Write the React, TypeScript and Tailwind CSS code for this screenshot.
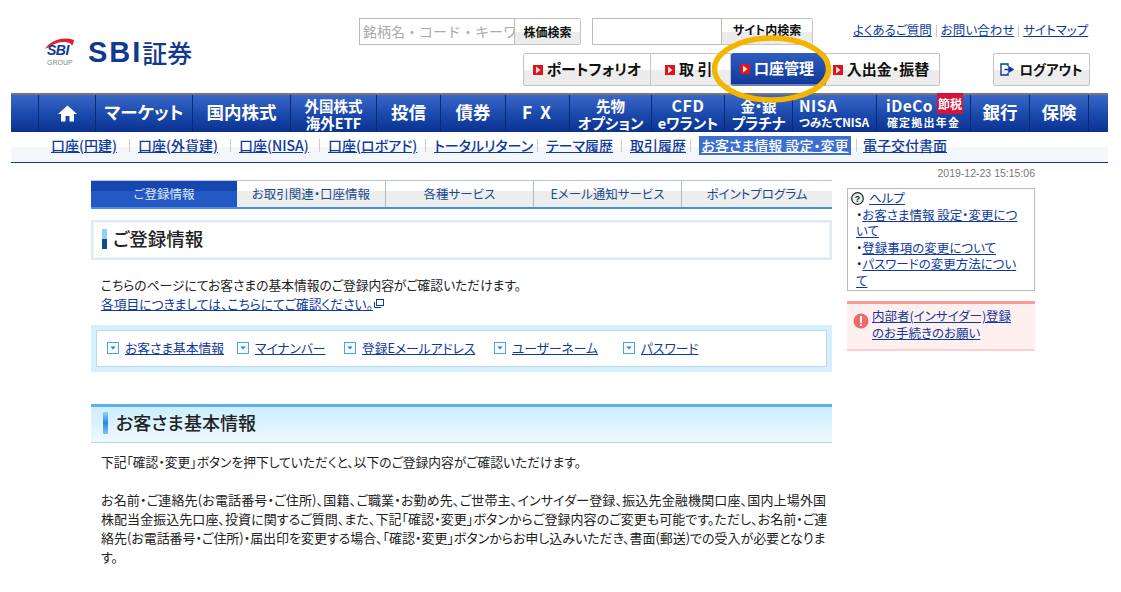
import type { ReactNode } from "react";

const jp = "font-['Noto_Sans_CJK_JP','Noto_Sans',sans-serif] [font-feature-settings:'palt']";

// ---- Small icons --------------------------------------------------------

function RedArrow() {
  return (
    <svg width="10" height="10" viewBox="0 0 10 10" className="shrink-0">
      <rect width="10" height="10" fill="#e0141e" />
      <path d="M3 1.5 L7.5 5 L3 8.5 Z" fill="#ffe9d6" />
    </svg>
  );
}

function AnchorIcon() {
  return (
    <svg width="12" height="12" viewBox="0 0 12 12" className="shrink-0">
      <rect x="0.5" y="0.5" width="11" height="11" fill="#f4faff" stroke="#4aa3e8" />
      <path d="M3.5 4.5 H8.5 L6 7.5 Z" fill="#2a7cc8" />
    </svg>
  );
}

function SectionMark({ tall }: { tall?: boolean }) {
  return (
    <span
      className={
        tall
          ? "h-[22px] w-[5px] shrink-0 bg-gradient-to-b from-[#8fd0f5] via-[#1d8be0] to-[#7cc6f2]"
          : "h-[20px] w-[5px] shrink-0 bg-gradient-to-b from-[#8fd0f5] from-50% to-[#0c4f8c] to-50%"
      }
    />
  );
}

function SbiLogo() {
  return (
    <div className="flex items-center gap-[13px]">
      <div className="relative h-[30px] w-[31px]">
        <svg width="31" height="16" viewBox="0 0 31 16" className="absolute left-0 top-0">
          <path d="M1 12 C6 4 18 -1 30 3 C30 5 29 7 28 9 C28 5 16 2 5 10 Z" fill="#e0202c" />
        </svg>
        <span className="absolute left-[3px] top-[6px] font-['Liberation_Sans',sans-serif] text-[14px] font-bold italic leading-[15px] tracking-[-0.5px] text-[#0f3a8f]">
          SBI
        </span>
        <span className="absolute left-[3px] top-[22px] font-['Liberation_Sans',sans-serif] text-[7px] leading-[8px] text-[#888]">
          GROUP
        </span>
      </div>
      <span className="flex items-center leading-[30px] text-[#0f3a8f]">
        <span className="font-['Liberation_Sans',sans-serif] text-[29px] font-bold tracking-[2px]">SBI</span>
        <span className="text-[25px] font-medium">証券</span>
      </span>
    </div>
  );
}

// ---- Header -------------------------------------------------------------

function GrayButton({ className, children }: { className: string; children: ReactNode }) {
  return (
    <div
      className={`flex items-center justify-center border border-[#c4c4c4] bg-gradient-to-b from-white from-50% to-[#ececec] to-50% font-bold text-[#111] ${className}`}
    >
      {children}
    </div>
  );
}

function Header() {
  return (
    <div className="flex h-[93px]">
      <div className="w-[359px] pl-[44px] pt-[37px]">
        <SbiLogo />
      </div>
      <div className="flex flex-col pt-[18px]">
        <div className="flex h-[27px]">
          <div className="flex w-[156px] items-center overflow-hidden whitespace-nowrap border border-[#bbb] pl-[3px] text-[14px] text-[#aaa] [font-feature-settings:normal]">
            銘柄名・コード・キーワード
          </div>
          <GrayButton className="w-[66px] rounded-r-[2px] border-l-0 text-[12px]">株価検索</GrayButton>
          <div className="ml-[11px] w-[130px] border border-[#bbb]" />
          <GrayButton className="w-[91px] rounded-r-[2px] border-l-0 pb-[3px] text-[12px]">サイト内検索</GrayButton>
          <div className="ml-[40px] flex items-center pb-[2px] text-[12.5px] text-[#0f3a9c]">
            <a className="underline">よくあるご質問</a>
            <span className="mx-[4px] h-[12px] w-px bg-[#ccc]" />
            <a className="underline">お問い合わせ</a>
            <span className="mx-[4px] h-[12px] w-px bg-[#ccc]" />
            <a className="underline">サイトマップ</a>
          </div>
        </div>
        <div className="ml-[164px] mt-[8px] flex h-[33px] text-[15px]">
          <GrayButton className="w-[128px] gap-[4px] rounded-l-[2px]">
            <RedArrow />
            ポートフォリオ
          </GrayButton>
          <GrayButton className="w-[80px] justify-start gap-[4px] border-l-0 pl-[14px]">
            <RedArrow />
            取 引
          </GrayButton>
          <div className="flex w-[95px] items-center justify-center gap-[4px] rounded-[2px] border-b-2 border-b-[#6a7fb0] bg-gradient-to-b from-[#2f5cc0] to-[#0f3a9c] pr-[3px] font-bold text-white">
            <RedArrow />
            口座管理
          </div>
          <GrayButton className="w-[114px] gap-[4px] rounded-r-[2px] border-l-0 pr-[3px]">
            <RedArrow />
            入出金・振替
          </GrayButton>
          <GrayButton className="ml-[53px] w-[97px] gap-[5px] rounded-[2px] text-[13.5px]">
            <svg width="14" height="13" viewBox="0 0 14 13" fill="none" stroke="#0f3a9c" strokeWidth="1.4">
              <path d="M8 3 V1 H1 V12 H8 V10" />
              <path d="M4.5 6.5 H9 V4 L13 6.5 L9 9 V6.5" fill="#0f3a9c" />
            </svg>
            ログアウト
          </GrayButton>
        </div>
      </div>
    </div>
  );
}

// ---- Global nav ---------------------------------------------------------

const navItems: { w: string; top: string; bottom?: string; cls?: string }[] = [
  { w: "w-[97px]", top: "マーケット" },
  { w: "w-[98px]", top: "国内株式" },
  { w: "w-[86px]", top: "外国株式", bottom: "海外ETF" },
  { w: "w-[64px]", top: "投信" },
  { w: "w-[65px]", top: "債券" },
  { w: "w-[64px]", top: "F X", cls: "tracking-[2px]" },
  { w: "w-[82px]", top: "先物", bottom: "オプション" },
  { w: "w-[73px]", top: "CFD", bottom: "eワラント", cls: "text-[16px] tracking-[0.5px]" },
  { w: "w-[68px]", top: "金・銀", bottom: "プラチナ" },
];

function NavCell({ className, children }: { className: string; children: ReactNode }) {
  return (
    <div
      className={`flex shrink-0 flex-col items-center justify-center border-l border-[#0a2a78] text-center font-bold text-white ${className}`}
    >
      {children}
    </div>
  );
}

function GlobalNav() {
  return (
    <div className="ml-[11px] flex h-[39px] w-[1097px] border-t-2 border-[#777] bg-gradient-to-b from-[#3a68c8] via-[#1c4bae] to-[#0a3190]">
      <div className="w-[27px] shrink-0" />
      <NavCell className="w-[57px]">
        <svg width="19" height="17" viewBox="0 0 19 17" fill="#fff">
          <path d="M9.5 0.5 L19 9 H16 V16.5 H11.5 V11 H7.5 V16.5 H3 V9 H0 Z" />
        </svg>
      </NavCell>
      {navItems.map((it) => (
        <NavCell key={it.top} className={it.w}>
          {it.bottom ? (
            <>
              <span className={`leading-[17px] ${it.cls ?? "text-[14.5px]"}`}>{it.top}</span>
              <span className="text-[14.5px] leading-[17px]">{it.bottom}</span>
            </>
          ) : (
            <span className={`pb-[3px] text-[17.5px] leading-[20px] ${it.cls ?? ""}`}>{it.top}</span>
          )}
        </NavCell>
      ))}
      <NavCell className="w-[84px] !items-start pl-[6px]">
        <span className="text-[15.5px] leading-[17px] tracking-[0.5px]">NISA</span>
        <span className="text-[11.5px] leading-[17px]">つみたてNISA</span>
      </NavCell>
      <NavCell className="relative w-[94px]">
        <span className="-ml-[28px] text-[15.5px] leading-[17px] tracking-[0.5px]">iDeCo</span>
        <span className="text-[11px] leading-[17px] tracking-[1.2px]">確定拠出年金</span>
        <span className="absolute right-[7px] top-[-2px] bg-[#d4143c] px-[1px] text-[12px] leading-[21px] text-white">
          節税
        </span>
      </NavCell>
      <NavCell className="w-[59px]">
        <span className="pb-[3px] text-[17.5px] leading-[20px]">銀行</span>
      </NavCell>
      <NavCell className="w-[59px]">
        <span className="pb-[3px] text-[17.5px] leading-[20px]">保険</span>
      </NavCell>
      <div className="flex-1 border-l border-[#0a2a78]" />
    </div>
  );
}

// ---- Sub nav ------------------------------------------------------------

const subItems = [
  { label: "口座(円建)", w: "w-[87px]" },
  { label: "口座(外貨建)", w: "w-[101px]" },
  { label: "口座(NISA)", w: "w-[89px]" },
  { label: "口座(ロボアド)", w: "w-[106px]" },
  { label: "トータルリターン", w: "w-[112px]" },
  { label: "テーマ履歴", w: "w-[84px]" },
  { label: "取引履歴", w: "w-[69px]" },
];

function SubNav() {
  return (
    <div className="ml-[11px] flex h-[31px] w-[1097px] items-start border-b border-[#0f3a8f] bg-gradient-to-b from-white from-50% to-[#f3f6fb] to-50% pl-[40px] pt-[4px] text-[14px] font-medium leading-[19px] text-[#0f3a9c]">
      {subItems.map((s) => (
        <div key={s.label} className={`flex shrink-0 items-center ${s.w}`}>
          <a className="whitespace-nowrap underline">{s.label}</a>
          <span className="ml-auto mr-[8px] h-[13px] w-px bg-[#ccc]" />
        </div>
      ))}
      <a className="w-[152px] shrink-0 whitespace-nowrap bg-[#3c6fd0] text-center text-white underline">
        お客さま情報 設定・変更
      </a>
      <span className="ml-[5px] mt-[3px] h-[13px] w-px bg-[#ccc]" />
      <a className="ml-[6px] whitespace-nowrap underline">電子交付書面</a>
    </div>
  );
}

// ---- Main column --------------------------------------------------------

function Tabs() {
  const tabs = [
    { label: "お取引関連・口座情報", w: "w-[149px]" },
    { label: "各種サービス", w: "w-[148px]" },
    { label: "Eメール通知サービス", w: "w-[148px]" },
    { label: "ポイントプログラム", w: "w-[150px]" },
  ];
  return (
    <div className="flex h-[29px] w-[741px] border-b-2 border-t border-b-[#4a8ee0] border-t-[#b8c4d8] text-[12.5px]">
      <div className="flex w-[146px] items-center justify-center bg-gradient-to-b from-[#1746b0] from-40% to-[#2458c4] to-40% text-[#dfe8fa]">
        ご登録情報
      </div>
      {tabs.map((t) => (
        <div
          key={t.label}
          className={`flex items-center justify-center border-r border-[#b0b8c0] bg-gradient-to-b from-white from-40% to-[#eceeee] to-40% text-[#1c4a8c] last:border-r-0 ${t.w}`}
        >
          {t.label}
        </div>
      ))}
    </div>
  );
}

function MainColumn() {
  return (
    <div className="w-[741px] text-[#222]">
      <Tabs />
      <div className="mt-[11px] h-[40px] border-2 border-[#e2e9f4] bg-white">
        <div className="flex h-full items-center gap-[6px] border border-[#f0f3f9] pb-[3px] pl-[8px] text-[18.5px] font-medium">
          <SectionMark />
          ご登録情報
        </div>
      </div>
      <div className="mt-[15px] pl-[10px] text-[12.75px] leading-[19px]">
        <p>こちらのページにてお客さまの基本情報のご登録内容がご確認いただけます。</p>
        <p className="flex items-center text-[#0f3a9c]">
          <a className="underline">各項目につきましては、こちらにてご確認ください。</a>
          <svg width="10" height="9" viewBox="0 0 10 9" fill="none" stroke="#0f3a9c" className="ml-[1px]">
            <rect x="2.5" y="0.5" width="7" height="6" strokeWidth="1" />
            <path d="M0.5 3 V8.5 H7" strokeWidth="1" />
          </svg>
        </p>
      </div>
      <div className="mt-[12px] h-[47px] bg-[#d6effe] p-[5px]">
        <div className="flex h-full items-center border border-[#bcd9f2] bg-white pb-[2px] pl-[10px] text-[12.75px] text-[#0f3a9c]">
          <div className="flex w-[130px] items-center gap-[6px]">
            <AnchorIcon />
            <a className="underline">お客さま基本情報</a>
          </div>
          <div className="flex w-[107px] items-center gap-[6px]">
            <AnchorIcon />
            <a className="underline">マイナンバー</a>
          </div>
          <div className="flex w-[150px] items-center gap-[6px]">
            <AnchorIcon />
            <a className="underline">登録Eメールアドレス</a>
          </div>
          <div className="flex w-[129px] items-center gap-[6px]">
            <AnchorIcon />
            <a className="underline">ユーザーネーム</a>
          </div>
          <div className="flex items-center gap-[6px]">
            <AnchorIcon />
            <a className="underline">パスワード</a>
          </div>
        </div>
      </div>
      <div className="mt-[32px] flex h-[39px] items-center gap-[8px] border-b border-t-[3px] border-b-[#a8dcf8] border-t-[#5cb0ea] bg-gradient-to-b from-[#cdeefe] to-[#eef9ff] pb-[4px] pl-[12px] text-[18px] font-medium">
        <SectionMark tall />
        お客さま基本情報
      </div>
      <div className="mt-[9px] pl-[10px] leading-[19px]">
        <p className="text-[12.75px]">下記「確認・変更」ボタンを押下していただくと、以下のご登録内容がご確認いただけます。</p>
        <div className="mt-[19px] whitespace-nowrap text-[13px]">
          <p className="tracking-[0.16px]">
            お名前・ご連絡先(お電話番号・ご住所)、国籍、ご職業・お勤め先、ご世帯主、インサイダー登録、振込先金融機関口座、国内上場外国
          </p>
          <p className="tracking-[0.05px]">
            株配当金振込先口座、投資に関するご質問、また、下記「確認・変更」ボタンからご登録内容のご変更も可能です。ただし、お名前・ご連
          </p>
          <p className="tracking-[-0.04px]">
            絡先(お電話番号・ご住所)・届出印を変更する場合、「確認・変更」ボタンからお申し込みいただき、書面(郵送)での受入が必要となりま
          </p>
          <p>す。</p>
        </div>
      </div>
    </div>
  );
}

// ---- Side column --------------------------------------------------------

function HelpLink({ children }: { children: ReactNode }) {
  return (
    <div>
      <span className="text-[#222]">・</span>
      <a className="underline">{children}</a>
    </div>
  );
}

function SideColumn() {
  return (
    <div className="ml-[15px] w-[188px]">
      <div className="-mt-[14px] text-right font-['Liberation_Sans',sans-serif] text-[10.5px] leading-[14px] text-[#777]">
        2019-12-23 15:15:06
      </div>
      <div className="mt-[8px] h-[103px] border border-[#bbb] px-[8px] pt-[1px] text-[12.5px] leading-[16.5px] text-[#0f3a9c]">
        <div className="-ml-[5px] flex items-center gap-[5px]">
          <svg width="13" height="13" viewBox="0 0 13 13" className="shrink-0">
            <circle cx="6.5" cy="6.5" r="5.8" fill="#e4f4ec" stroke="#222" strokeWidth="1.2" />
            <text x="6.5" y="10" textAnchor="middle" fontSize="9" fontWeight="700" fill="#222" fontFamily="Liberation Sans">
              ?
            </text>
          </svg>
          <a className="underline">ヘルプ</a>
        </div>
        <HelpLink>お客さま情報 設定・変更について</HelpLink>
        <HelpLink>登録事項の変更について</HelpLink>
        <HelpLink>パスワードの変更方法について</HelpLink>
      </div>
      <div className="mt-[10px] flex h-[50px] gap-[3px] border-b-2 border-t-[3px] border-b-[#ffd0d0] border-t-[#ff9a9a] bg-[#fff0f0] pl-[6px] pt-[4px] text-[12.5px] leading-[16.5px] text-[#0f3a9c]">
        <svg width="16" height="16" viewBox="0 0 16 16" className="mt-[5px] shrink-0">
          <circle cx="8" cy="8" r="7.5" fill="#f0686e" />
          <rect x="7" y="3" width="2" height="7" fill="#fff" />
          <rect x="7" y="11" width="2" height="2" fill="#fff" />
        </svg>
        <a className="underline">
          内部者(インサイダー)登録
          <br />
          のお手続きのお願い
        </a>
      </div>
    </div>
  );
}

export default function App() {
  return (
    <div className={`relative h-[592px] w-[1121px] overflow-hidden bg-white ${jp}`}>
      <Header />
      <GlobalNav />
      <SubNav />
      <div className="ml-[91px] mt-[17px] flex items-start">
        <MainColumn />
        <SideColumn />
      </div>
      {/* annotation drawn over the page */}
      <svg width="120" height="74" viewBox="0 0 120 74" className="absolute left-[712px] top-[33px]">
        <ellipse cx="59.5" cy="36" rx="57" ry="31" fill="none" stroke="#f5b400" strokeWidth="5.5" />
      </svg>
    </div>
  );
}
